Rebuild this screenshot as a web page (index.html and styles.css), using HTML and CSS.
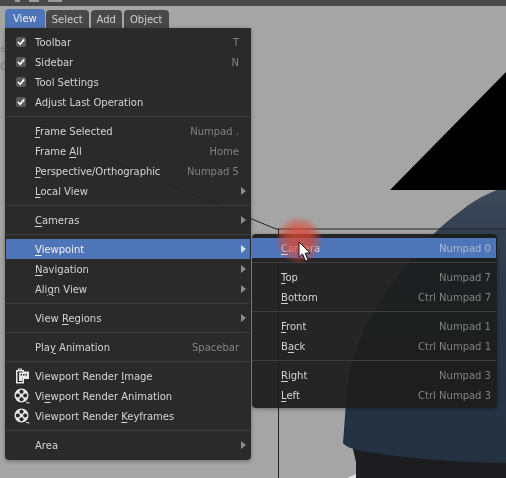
FILE: index.html
```html
<!DOCTYPE html>
<html lang="en">
<head>
    <meta charset="UTF-8">
    <title>Viewport menu</title>
    <link rel="stylesheet" href="styles.css">
</head>
<body>

    <div class="screen">
        <!-- 3D viewport behind the menus -->
        <svg class="viewport" width="506" height="478" viewBox="0 0 506 478">
            <defs>
                <linearGradient id="body-shade" x1="0" y1="0" x2="0" y2="1">
                    <stop offset="0" stop-color="#3b4959"/>
                    <stop offset="0.35" stop-color="#2a394a"/>
                    <stop offset="1" stop-color="#233141"/>
                </linearGradient>
            </defs>
            <path fill="#1d1d1f" d="M352 445 L506 455 L506 478 L356 478 L356 462 Z"/>
            <path fill="url(#body-shade)" d="M343 443 C345 420 346 395 349 375 C352 360 356 350 362 335 C380 295 420 240 462 210 C480 196 495 190 506 187 L506 463 C450 462 400 458 357 450 C350 448 345 446 343 443 Z"/>
            <path fill="#e4e4e4" d="M347 478 L356 474 L356 478 Z"/>
            <path fill="#000" d="M390 190 L506 72 L506 190 Z"/>
            <path fill="none" stroke="#222" d="M85 150 L276 229 M276 229 L506 229 M278.5 229 L278.5 478"/>
            <text class="ghost" x="0" y="52">e</text>
            <text class="ghost" x="0" y="70">C</text>
        </svg>

        <header class="topbar">
            <i></i><i></i><i></i>
        </header>

        <nav class="tabs">
            <a class="tab active">View</a>
            <a class="tab">Select</a>
            <a class="tab">Add</a>
            <a class="tab">Object</a>
        </nav>

        <ul class="menu main-menu">
            <li class="item"><span class="check"><svg width="10" height="10" viewBox="0 0 10 10"><path d="M2 5 L4.2 7.3 L8.2 2.4"/></svg></span><span class="label">Toolbar</span><span class="hint">T</span></li>
            <li class="item"><span class="check"><svg width="10" height="10" viewBox="0 0 10 10"><path d="M2 5 L4.2 7.3 L8.2 2.4"/></svg></span><span class="label">Sidebar</span><span class="hint">N</span></li>
            <li class="item"><span class="check"><svg width="10" height="10" viewBox="0 0 10 10"><path d="M2 5 L4.2 7.3 L8.2 2.4"/></svg></span><span class="label">Tool Settings</span></li>
            <li class="item"><span class="check"><svg width="10" height="10" viewBox="0 0 10 10"><path d="M2 5 L4.2 7.3 L8.2 2.4"/></svg></span><span class="label">Adjust Last Operation</span></li>
            <li class="sep"></li>
            <li class="item"><span class="label"><u>F</u>rame Selected</span><span class="hint">Numpad .</span></li>
            <li class="item"><span class="label">Frame <u>A</u>ll</span><span class="hint">Home</span></li>
            <li class="item"><span class="label narrow"><u>P</u>erspective/Orthographic</span><span class="hint">Numpad 5</span></li>
            <li class="item more"><span class="label"><u>L</u>ocal View</span></li>
            <li class="sep"></li>
            <li class="item more"><span class="label"><u>C</u>ameras</span></li>
            <li class="sep"></li>
            <li class="item more active"><span class="label"><u>V</u>iewpoint</span></li>
            <li class="item more"><span class="label"><u>N</u>avigation</span></li>
            <li class="item more"><span class="label">Ali<u>g</u>n View</span></li>
            <li class="sep"></li>
            <li class="item more"><span class="label">View <u>R</u>egions</span></li>
            <li class="sep"></li>
            <li class="item"><span class="label">Pla<u>y</u> Animation</span><span class="hint">Spacebar</span></li>
            <li class="sep"></li>
            <li class="item">
                <svg class="icon" width="16" height="16" viewBox="0 0 16 16">
                    <path fill="#e6e6e6" d="M4 0.5 H8 V2 H10 V3.5 H15 V11 H10 V15.5 H2 V2 H4 Z"/>
                    <path fill="#282828" d="M4 3.5 H8.5 V14 H3.5 V3.5 Z M5 1.5 H7 V2 H5 Z"/>
                    <path fill="#e6e6e6" d="M5 4.5 H14 V10 H8.5 V13 H5 Z"/>
                    <path fill="#282828" d="M6.5 6 H8 V7.5 H6.5 Z M9 6 H10.5 V7.5 H9 Z M11.5 6 H13 V7.5 H11.5 Z"/>
                </svg>
                <span class="label">Viewport Render <u>I</u>mage</span>
            </li>
            <li class="item">
                <svg class="icon" width="16" height="16" viewBox="0 0 16 16">
                    <circle cx="7.5" cy="7.5" r="7" fill="#e6e6e6"/>
                    <g fill="#282828"><circle cx="7.5" cy="3.8" r="2"/><circle cx="7.5" cy="11.2" r="2"/><circle cx="3.8" cy="7.5" r="2"/><circle cx="11.2" cy="7.5" r="2"/></g>
                    <path stroke="#e6e6e6" fill="none" d="M12 14.5 L15.5 15"/>
                </svg>
                <span class="label">Vi<u>e</u>wport Render Animation</span>
            </li>
            <li class="item">
                <svg class="icon" width="16" height="16" viewBox="0 0 16 16">
                    <circle cx="7.5" cy="7.5" r="7" fill="#e6e6e6"/>
                    <g fill="#282828"><circle cx="7.5" cy="3.8" r="2"/><circle cx="7.5" cy="11.2" r="2"/><circle cx="3.8" cy="7.5" r="2"/><circle cx="11.2" cy="7.5" r="2"/></g>
                    <path stroke="#e6e6e6" fill="none" d="M12 14.5 L15.5 15"/>
                </svg>
                <span class="label">Viewport Render <u>K</u>eyframes</span>
            </li>
            <li class="sep"></li>
            <li class="item more"><span class="label">Area</span></li>
        </ul>

        <ul class="menu sub-menu">
            <li class="item active"><span class="label"><u>C</u>amera</span><span class="hint">Numpad 0</span></li>
            <li class="sep"></li>
            <li class="item"><span class="label"><u>T</u>op</span><span class="hint">Numpad 7</span></li>
            <li class="item"><span class="label"><u>B</u>ottom</span><span class="hint">Ctrl Numpad 7</span></li>
            <li class="sep"></li>
            <li class="item"><span class="label"><u>F</u>ront</span><span class="hint">Numpad 1</span></li>
            <li class="item"><span class="label">B<u>a</u>ck</span><span class="hint">Ctrl Numpad 1</span></li>
            <li class="sep"></li>
            <li class="item"><span class="label"><u>R</u>ight</span><span class="hint">Numpad 3</span></li>
            <li class="item"><span class="label"><u>L</u>eft</span><span class="hint">Ctrl Numpad 3</span></li>
        </ul>

        <div class="halo"></div>
        <svg class="cursor" width="16" height="22" viewBox="0 0 16 22">
            <path fill="#fff" stroke="#111" stroke-width="1" d="M1 1 L1 16 L4.5 13 L7.5 20 L10 19 L7.2 12.2 L12 12 Z"/>
        </svg>
    </div>

</body>
</html>
```

FILE: styles.css
```css
body {
    margin: 0;
    font-family: 'DejaVu Sans', sans-serif;
    font-size: 10px;
    color: #d4d4d4;
}
.screen {
    position: relative;
    width: 506px;
    height: 478px;
    overflow: hidden;
    background-color: #a5a5a5;
    filter: blur(0.35px); /* the reference is a soft video frame */
}
.viewport {
    position: absolute;
    left: 0;
    top: 0;
}
.ghost {
    font-size: 11px;
    fill: #868686;
}
.topbar {
    position: relative;
    display: flex;
    gap: 9px;
    height: 6px;
    padding-left: 15px;
    background-color: #484848;
}
.topbar i {
    width: 5px;
    height: 2px;
    background-color: #9a9a9a;
}
.topbar i:nth-child(2) {
    width: 10px;
}
.topbar i:nth-child(3) {
    width: 14px;
}
.tabs {
    position: relative;
    display: flex;
    align-items: flex-end;
    gap: 2px;
    height: 22px;
    padding-left: 5px;
}
.tab {
    display: flex;
    align-items: center;
    justify-content: center;
    height: 18px;
    padding: 0 6px;
    background-color: #484848;
    border-radius: 4px 4px 0 0;
    color: #d0d0d0;
}
.tab.active {
    height: 19px;
    margin-right: -1px;
    padding: 0 8px;
    background-color: #4e75b8;
    color: #f0f0f0;
}
.menu {
    position: absolute;
    box-sizing: border-box;
    margin: 0;
    list-style-type: none;
    border-radius: 0 0 4px 4px;
    box-shadow: 0 1px 4px rgba(0, 0, 0, 0.35);
}
.main-menu {
    left: 5px;
    top: 28px;
    width: 246px;
    height: 432px;
    padding: 4px 1px 5px 1px;
    background-color: rgba(38, 38, 38, 0.97);
}
.sub-menu {
    left: 252px;
    top: 234px;
    width: 245px;
    height: 174px;
    padding: 4px 1px 3px 0;
    border-radius: 4px;
    background-color: rgba(30, 30, 30, 0.95);
}
.item {
    position: relative;
    display: flex;
    align-items: center;
    justify-content: space-between;
    height: 20px;
    padding: 0 11px 0 29px;
}
.sub-menu .item {
    padding: 0 5px 0 29px;
}
.item.active {
    background-color: #4e75b8;
    color: #eef1f6;
}
.item.active .hint {
    color: #a9b9d2;
}
.hint {
    color: #828282;
}
.label u {
    text-underline-offset: 2px;
}
.label.narrow {
    letter-spacing: -0.08px;
}
.sep {
    height: 1px;
    margin: 4px 0;
    background-color: #3e3e3e;
}
.check {
    position: absolute;
    left: 10px;
    top: 5px;
    width: 10px;
    height: 10px;
    border-radius: 2px;
    background-color: #5a5a5a;
}
.check svg {
    display: block;
}
.check path {
    fill: none;
    stroke: #fff;
    stroke-width: 1.7;
}
.icon {
    position: absolute;
    left: 8px;
    top: 2px;
}
.more::after {
    content: '';
    position: absolute;
    right: 4px;
    top: 6px;
    border-left: 5px solid #8c8c8c;
    border-top: 4px solid transparent;
    border-bottom: 4px solid transparent;
}
.more.active::after {
    border-left-color: #d8e0ee;
}
.halo {
    position: absolute;
    left: 275px;
    top: 216px;
    width: 48px;
    height: 48px;
    border-radius: 50%;
    background: radial-gradient(circle closest-side, rgba(222, 72, 52, 0.78) 0%, rgba(222, 72, 52, 0.7) 50%, rgba(222, 72, 52, 0.35) 80%, rgba(222, 72, 52, 0) 100%);
}
.cursor {
    position: absolute;
    left: 298px;
    top: 241px;
}
```
